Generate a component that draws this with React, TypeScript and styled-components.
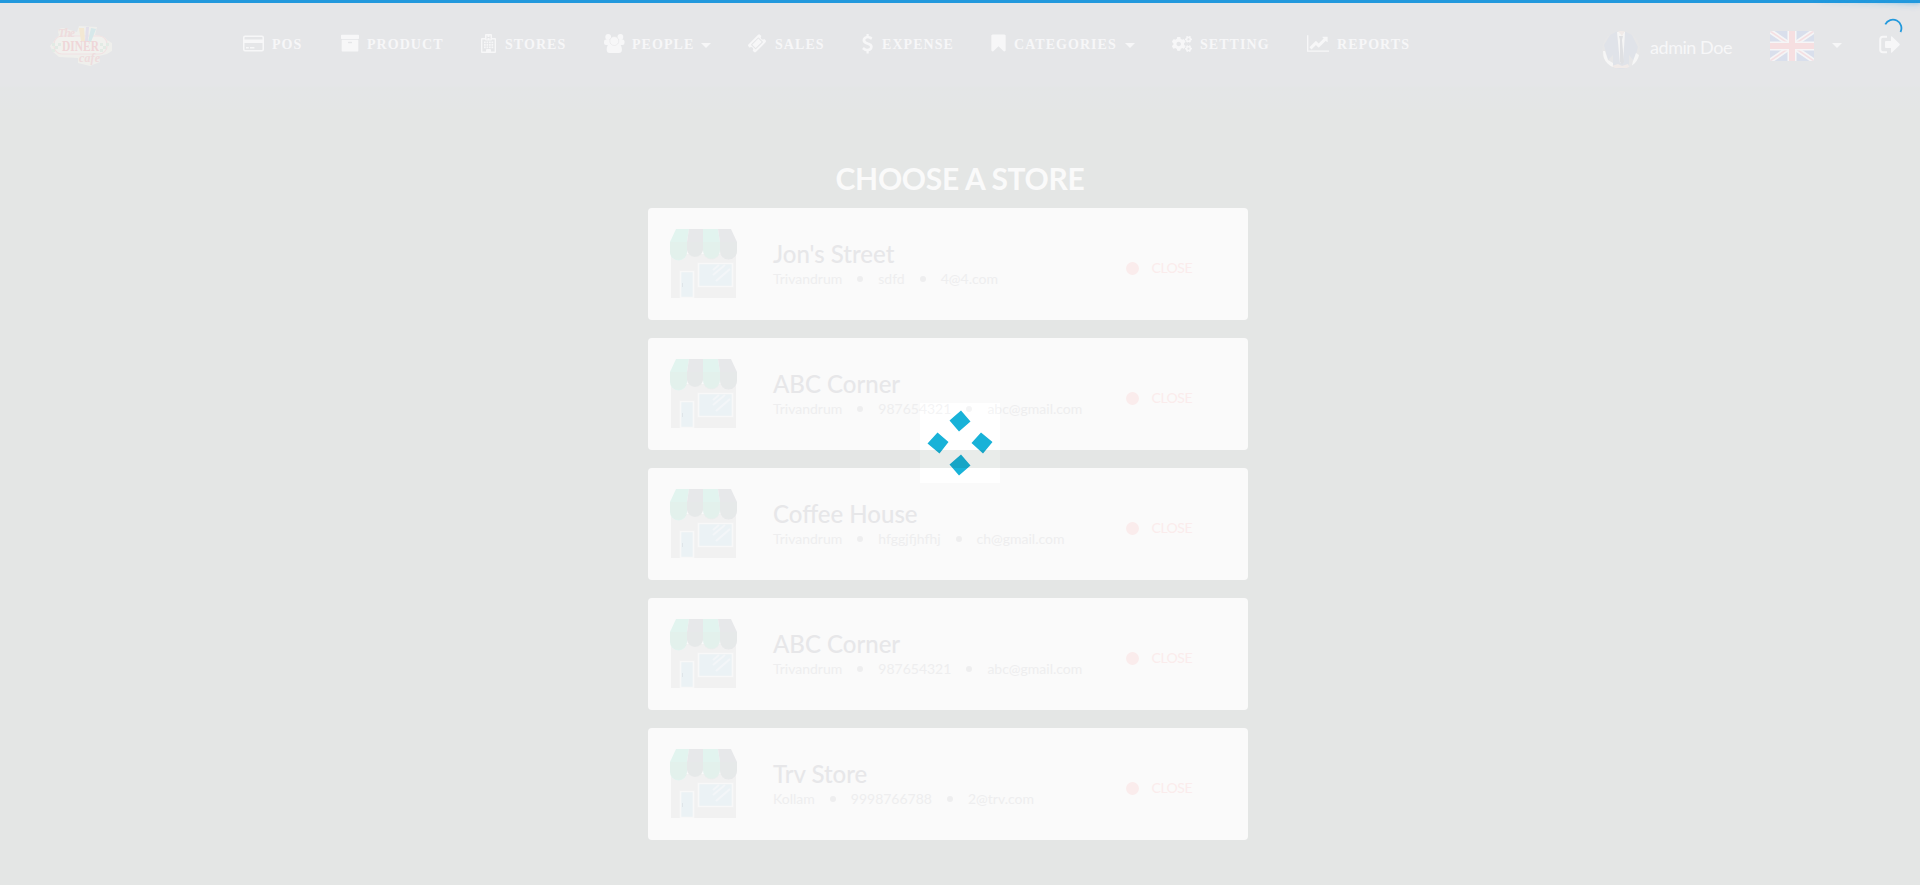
import React from 'react';
import styled, { createGlobalStyle } from 'styled-components';
import { FaCogs } from 'react-icons/fa';

const GlobalStyle = createGlobalStyle`
  * { box-sizing: border-box; }
  html, body { margin: 0; background: #e4e6e5; }
  body { height: 885px; overflow: hidden; font-family: Lato, sans-serif; }
  svg { display: block; }
`;

const Page = styled.div`
  height: 885px;
  overflow: hidden;
  background: #e4e6e5;
`;

const Header = styled.header`
  display: flex;
  height: 110px;
  padding: 24px 20px 0 48px;
  background: linear-gradient(#e5e6e8 0, #e5e6e8 86px, #e4e6e6 88px, #e4e6e7 92px, #e4e6e6 109px, #e4e6e5 110px);
  color: #f7f7f8;
`;

const Brand = styled.div`
  width: 195px;
`;

const Nav = styled.nav`
  display: flex;
  flex: 1;
`;

const NavItem = styled.a<{ $width: number }>`
  display: flex;
  width: ${(p) => p.$width}px;
  height: 42px;
  font: bold 14px/42px 'Liberation Serif', serif;
  letter-spacing: 1.05px;
  white-space: nowrap;
`;

const NavIcon = styled.span<{ $width: number }>`
  flex: none;
  width: ${(p) => p.$width}px;
  padding-top: 10px;
`;

const Caret = styled.span<{ $gap?: number }>`
  width: 10px;
  height: 5px;
  margin: 19px 0 0 ${(p) => p.$gap ?? 0}px;
  border: 5px solid transparent;
  border-top-color: currentColor;
  border-bottom: 0;
`;

const Account = styled.div`
  display: flex;
  width: 298px;
`;

const Avatar = styled.div`
  width: 38px;
  height: 38px;
  margin: 7px 10px 0 0;
`;

const UserName = styled.span`
  width: 120px;
  padding-top: 11px;
  font-size: 18px;
  letter-spacing: -0.45px;
  line-height: 24px;
  white-space: nowrap;
`;

const Flag = styled.div`
  width: 44px;
  height: 30px;
  margin: 7px 18px 0 0;
`;

const SignOut = styled.div`
  margin: 11px 0 0 37px;
`;

const Main = styled.main`
  width: 600px;
  margin-left: 648px;
`;

const Title = styled.h1`
  width: 624px;
  height: 98px;
  margin: 0;
  padding-top: 50px;
  color: #fafafa;
  font-size: 30px;
  font-weight: 700;
  letter-spacing: -0.3px;
  line-height: 36px;
  text-align: center;
  white-space: nowrap;
`;

const StoreList = styled.div`
  display: flex;
  flex-direction: column;
  gap: 18px;
`;

const StoreCard = styled.article`
  display: flex;
  height: 112px;
  padding: 21px 56px 0 22px;
  border-radius: 4px;
  background: #fafafa;
`;

const StorePicture = styled.div`
  width: 103px;
`;

const StoreInfo = styled.div`
  flex: 1;
  padding-top: 10px;
`;

const StoreName = styled.h2`
  margin: 0;
  color: #e7e7e9;
  font-size: 24px;
  font-weight: 500;
  line-height: 30px;
`;

const Meta = styled.div`
  display: flex;
  align-items: center;
  gap: 15px;
  margin-top: 1px;
  color: #eeeeef;
  font-size: 14px;
  line-height: 18px;
`;

const Dot = styled.i<{ $size: number }>`
  width: ${(p) => p.$size}px;
  height: ${(p) => p.$size}px;
  border-radius: 50%;
  background: currentColor;
`;

const Status = styled.div`
  display: flex;
  align-items: center;
  align-self: flex-start;
  gap: 13px;
  margin-top: 29px;
  color: #faecec;
  font-size: 14px;
  letter-spacing: -0.5px;
  line-height: 20px;
`;

const ProgressBar = styled.div`
  position: fixed;
  top: 0;
  left: 0;
  width: 100%;
  height: 3px;
  background: #2299dd;
`;

const ProgressGlow = styled.div`
  position: absolute;
  top: 0;
  right: 0;
  width: 100px;
  height: 3px;
  box-shadow: 0 0 10px #2299dd, 0 0 5px #2299dd;
  opacity: 0.8;
  transform: rotate(3deg) translate(0, -4px);
`;

const ProgressSpinner = styled.div`
  position: fixed;
  top: 18px;
  left: 1883px;
`;

const LoaderBox = styled.div`
  position: fixed;
  top: 403px;
  left: 920px;
  width: 80px;
  height: 80px;
  background: #060606;
  mix-blend-mode: color-dodge;
`;

const LoaderMarks = styled.div`
  position: fixed;
  top: 403px;
  left: 920px;
  mix-blend-mode: multiply;
`;

const PATHS = {
  archive:
    'M1088 832q0-26-19-45t-45-19h-256q-26 0-45 19t-19 45 19 45 45 19h256q26 0 45-19t19-45zm576-192v960q0 26-19 45t-45 19h-1408q-26 0-45-19t-19-45v-960q0-26 19-45t45-19h1408q26 0 45 19t19 45zm64-448v256q0 26-19 45t-45 19h-1536q-26 0-45-19t-19-45v-256q0-26 19-45t45-19h1536q26 0 45 19t19 45z',
  ticket:
    'M1024 452l316 316-572 572-316-316zm-211 979l618-618q19-19 19-45t-19-45l-362-362q-18-18-45-18t-45 18l-618 618q-19 19-19 45t19 45l362 362q18 18 45 18t45-18zm889-637l-907 908q-37 37-90.5 37t-90.5-37l-126-126q56-56 56-136t-56-136-136-56-136 56l-125-126q-37-37-37-90.5t37-90.5l907-906q37-37 90.5-37t90.5 37l125 125q-56 56-56 136t56 136 136 56 136-56l126 125q37 37 37 90.5t-37 90.5z',
  dollar:
    'M1362 1185q0 153-99.5 263.5t-258.5 136.5v175q0 14-9 23t-23 9h-135q-13 0-22.5-9.5t-9.5-22.5v-175q-66-9-127.5-31t-101.5-44.5-74-48-46.5-37.5-17.5-18q-17-21-2-41l103-135q7-10 23-12 15-2 24 9l2 2q113 99 243 125 37 8 74 8 81 0 142.5-43t61.5-122q0-28-15-53t-33.5-42-58.5-37.5-66-32-80-32.5q-39-16-61.5-25t-61.5-26.5-62.5-31-56.5-35.5-53.5-42.5-43.5-49-35.5-58-21-66.5-8.5-78q0-138 98-242t255-134v-180q0-13 9.5-22.5t22.5-9.5h135q14 0 23 9t9 23v176q57 6 110.5 23t87 33.5 63.5 37.5 39 29 15 14q17 18 5 38l-81 146q-8 15-23 16-14 3-27-7-3-3-14.5-12t-39-26.5-58.5-32-74.5-26-85.5-11.5q-95 0-155 43t-60 111q0 26 8.5 48t29.5 41.5 39.5 33 56 31 60.5 27 70 27.5q53 20 81 31.5t76 35 75.5 42.5 62 50 53 63.5 31.5 76.5 13 94z',
  bookmark:
    'M1420 128q23 0 44 9 33 13 52.5 41t19.5 62v1289q0 34-19.5 62t-52.5 41q-19 8-44 8-48 0-83-32l-441-424-441 424q-36 33-83 33-23 0-44-9-33-13-52.5-41t-19.5-62v-1289q0-34 19.5-62t52.5-41q21-9 44-9h1048z',
  chart:
    'M2048 1536v128h-2048v-1536h128v1408h1920zm-128-1248v435q0 21-19.5 29.5t-35.5-7.5l-121-121-633 633q-10 10-23 10t-23-10l-233-233-416 416-192-192 585-585q10-10 23-10t23 10l233 233 464-464-121-121q-16-16-7.5-35.5t29.5-19.5h435q14 0 23 9t9 23z',
};

const Glyph = ({ d, box, w, h = 20 }: { d: string; box: string; w: number; h?: number }) => (
  <svg width={w} height={h} viewBox={box} fill="currentColor">
    <path d={d} />
  </svg>
);

const CardIcon = () => (
  <svg width="21" height="20" viewBox="0 0 21 20" fill="currentColor">
    <path fillRule="evenodd" d="M2 1.500h17a2 2 0 0 1 2 2v12a2 2 0 0 1-2 2H2a2 2 0 0 1-2-2v-12a2 2 0 0 1 2-2zM1.500 3.500v2h18v-2l-.5-.5H2zM1.500 9v6.500l.5.500h17l.5-.500V9zM3 13h2.800v1.500H3zM7 13h4.400v1.500H7z" />
  </svg>
);

const HospitalIcon = () => (
  <svg width="15" height="20" viewBox="0 0 15 20" fill="currentColor">
    <path fillRule="evenodd" d="M4 4V1q0-1 1-1h5q1 0 1 1v3h3q1 0 1 1v13q0 1-1 1H1q-1 0-1-1V5q0-1 1-1zM1.400 5.400v12.200H5V16q0-1 1-1h3q1 0 1 1v1.600h3.600V5.400H11q0 1-1 1H5q-1 0-1-1z" />
    <path d="M3 7.500h1.700v1.700H3zM5.500 7.500h1.700v1.700H5.500zM8 7.500h1.700v1.700H8zM10.500 7.500h1.700v1.700h-1.700zM3 10h1.700v1.700H3zM5.500 10h1.700v1.700H5.500zM8 10h1.700v1.700H8zM10.500 10h1.700v1.700h-1.700zM3 12.500h1.700v1.700H3zM5.500 12.500h1.700v1.700H5.500zM8 12.500h1.700v1.700H8zM10.500 12.500h1.700v1.700h-1.700z" />
    <path d="M6 1.500v4M9 1.500v4M6 3.500h3" stroke="#e5e6e8" strokeWidth="1" />
  </svg>
);

const UsersIcon = () => (
  <svg width="21" height="20" viewBox="0 1 21 20" fill="currentColor">
    <circle cx="4.200" cy="4" r="2.900" />
    <circle cx="16.400" cy="4" r="2.900" />
    <rect y="6.500" width="6.500" height="5.500" rx="2" />
    <rect x="14" y="6.500" width="6.500" height="5.500" rx="2" />
    <path d="M2.700 17c0-4 1.500-6.500 4-6.500h7.200c2.500 0 4 2.500 4 6.500 0 2-1.200 3-3 3H5.700c-1.800 0-3-1-3-3z" />
    <circle cx="10.300" cy="8" r="4.500" stroke="#e5e6e8" strokeWidth=".6" />
  </svg>
);

const SignOutIcon = () => (
  <svg width="21" height="19" viewBox="0 0 21 19" fill="currentColor">
    <path d="M8 1.700H4Q1.200 1.700 1.200 4.500v10q0 2.800 2.800 2.800h4" fill="none" stroke="currentColor" strokeWidth="2" />
    <path d="M6 7q0-1 1-1h5V2q0-1.300 1-.6l7.500 7.400q.6.700 0 1.400L13 17.500q-1 .8-1-.6V13H7q-1 0-1-1z" />
  </svg>
);

const Logo = () => (
  <svg width="68" height="44" viewBox="0 0 68 44">
    <path d="M11 11Q8 4 15 4l14 4 2-6 18 1-2 8q10 1 12 5l5 3v8l-5 3-8 2 1 6-10 4-12-3v-5l-19-1-6-5-3-6 4-5z" fill="#efefec" />
    <rect x="6" y="12" width="53" height="18" rx="8" fill="#f1f1ee" stroke="#f1e2e3" strokeWidth="1.200" />
    <g fill="#e2ebe5">
      <path d="M4 19h3v3H4zM7 22h3v3H7zM4 25h3v3H4zM10 19h3v3h-3zM52 19h3v3h-3zM55 22h3v3h-3zM52 25h3v3h-3zM58 19h3v3h-3z" />
    </g>
    <path d="m31 4 5 0 1 13h-4z" fill="#f3e8d3" />
    <path d="m38 3 3 0-1 14h-3z" fill="#e3e0ea" />
    <path d="m43 4 5 1-5 13h-3z" fill="#d6e8ea" />
    <text x="10" y="13" fill="#eedcdd" fontFamily="Liberation Serif" fontSize="12" fontStyle="italic" fontWeight="700" textLength="17">The</text>
    <text x="14" y="27" fill="#efd6d8" fontFamily="Liberation Serif" fontSize="14" fontWeight="700" textLength="37" lengthAdjust="spacingAndGlyphs">DINER</text>
    <text x="31" y="38" fill="#eedcdd" fontFamily="Liberation Serif" fontSize="12" fontStyle="italic" fontWeight="700" textLength="21">cafe</text>
  </svg>
);

const Portrait = () => (
  <svg width="38" height="38" viewBox="0 0 38 38">
    <defs>
      <clipPath id="portrait"><circle cx="19" cy="19" r="19" /></clipPath>
    </defs>
    <g clipPath="url(#portrait)">
      <rect width="38" height="38" fill="#e7e7e8" />
      <path d="M2 14 8 4l7-4 4 3 4-3 7 4 6 12-4 14-5-6v14H11V24l-5 5z" fill="#e0e3e9" />
      <path d="m3 20 3 9 5 3v6H8Q1 32 1 20zM34 22l-3 8-2 8q7-3 8-14z" fill="#f6f6f6" />
      <path d="M15 1h8l-2 31h-3z" fill="#f5f5f5" />
      <path d="m17 5 4 0-1 4 2 22-2 3-2-3V9z" fill="#dfe0e3" />
      <path d="M16 0h7l-3 5zM10 35l6-2 4 2 6-2 2 4H12z" fill="#f1ebe9" />
    </g>
  </svg>
);

const UnionJack = () => (
  <svg width="44" height="30" viewBox="0 0 44 30">
    <defs>
      <clipPath id="flag"><rect width="44" height="30" rx="2" /></clipPath>
    </defs>
    <g clipPath="url(#flag)">
      <rect width="44" height="30" fill="#d9dfec" />
      <path d="m0 0 44 30M44 0 0 30" stroke="#f5f5f6" strokeWidth="5" />
      <path d="m0 0 44 30M44 0 0 30" stroke="#f5dfe2" strokeWidth="1.600" />
      <path d="M22 0v30M0 15h44" stroke="#f6f6f7" strokeWidth="9" />
      <path d="M22 0v30M0 15h44" stroke="#f6dfe1" strokeWidth="6" />
    </g>
  </svg>
);

const Shop = () => (
  <svg width="67" height="69" viewBox="0 0 67 69">
    <path d="M1 25h65v44H1z" fill="#f1f1f1" />
    <path d="M6 0h13l-2 13v10a8.500 8.500 0 0 1-17 0V13z" fill="#e2f4ef" />
    <path d="M19 0h14v21a8.200 8.500 0 0 1-16 0V13z" fill="#e7e8ea" />
    <path d="M33 0h15l2 13v8a8.200 8.500 0 0 1-17 0z" fill="#e2f4ef" />
    <path d="M48 0h13l6 13v9a8.400 8.500 0 0 1-17 0V13z" fill="#e7e8ea" />
    <path d="M0 13h67v8a8.400 8.500 0 0 1-17 1 8.400 8.500 0 0 1-17 0 8.400 8.500 0 0 1-16 0 8.400 8.500 0 0 1-17 0z" fill="#e6ebe8" opacity=".35" />
    <path d="M28.500 34.500h34v23h-34zM10.500 42.500h13v26h-13z" fill="#ebf2f5" stroke="#f8f8f8" strokeWidth="1.600" />
    <path d="m43 41 6-5M43 46l12-10M46 52l14-12" stroke="#f3f6f8" strokeWidth="2" />
    <path d="M12.500 54v4" stroke="#dfe5e9" />
  </svg>
);

const navItems = [
  { label: 'POS', icon: <CardIcon />, width: 98, iconWidth: 29 },
  { label: 'PRODUCT', icon: <Glyph d={PATHS.archive} box="64 80 1664 1792" w={18} />, width: 140, iconWidth: 26 },
  { label: 'STORES', icon: <HospitalIcon />, width: 123, iconWidth: 24 },
  { label: 'PEOPLE', icon: <UsersIcon />, width: 144, iconWidth: 28, caret: 7 },
  { label: 'SALES', icon: <Glyph d={PATHS.ticket} box="53 60 1686 1792" w={18} />, width: 114, iconWidth: 27 },
  { label: 'EXPENSE', icon: <Glyph d={PATHS.dollar} box="420 40 950 1792" w={11} />, width: 129, iconWidth: 20 },
  { label: 'CATEGORIES', icon: <Glyph d={PATHS.bookmark} box="256 80 1280 1792" w={15} />, width: 181, iconWidth: 23, caret: 8 },
  { label: 'SETTING', icon: <FaCogs size={20} />, width: 135, iconWidth: 28 },
  { label: 'REPORTS', icon: <Glyph d={PATHS.chart} box="0 40 2048 1792" w={22} />, width: 110, iconWidth: 30 },
];

const stores = [
  { name: "Jon's Street", meta: ['Trivandrum', 'sdfd', '4@4.com'] },
  { name: 'ABC Corner', meta: ['Trivandrum', '987654321', 'abc@gmail.com'] },
  { name: 'Coffee House', meta: ['Trivandrum', 'hfggjfjhfhj', 'ch@gmail.com'] },
  { name: 'ABC Corner', meta: ['Trivandrum', '987654321', 'abc@gmail.com'] },
  { name: 'Trv Store', meta: ['Kollam', '9998766788', '2@trv.com'] },
];

export default function App() {
  return (
    <>
      <GlobalStyle />
      <Page>
        <Header>
          <Brand><Logo /></Brand>
          <Nav>
            {navItems.map((item) => (
              <NavItem key={item.label} $width={item.width}>
                <NavIcon $width={item.iconWidth}>{item.icon}</NavIcon>
                {item.label}
                {item.caret && <Caret $gap={item.caret} />}
              </NavItem>
            ))}
          </Nav>
          <Account>
            <Avatar><Portrait /></Avatar>
            <UserName>admin Doe</UserName>
            <Flag><UnionJack /></Flag>
            <Caret />
            <SignOut><SignOutIcon /></SignOut>
          </Account>
        </Header>
        <Main>
          <Title>CHOOSE A STORE</Title>
          <StoreList>
            {stores.map((store, index) => (
              <StoreCard key={index}>
                <StorePicture><Shop /></StorePicture>
                <StoreInfo>
                  <StoreName>{store.name}</StoreName>
                  <Meta>
                    <span>{store.meta[0]}</span>
                    <Dot $size={6} />
                    <span>{store.meta[1]}</span>
                    <Dot $size={6} />
                    <span>{store.meta[2]}</span>
                  </Meta>
                </StoreInfo>
                <Status><Dot $size={13} />CLOSE</Status>
              </StoreCard>
            ))}
          </StoreList>
        </Main>
      </Page>
      <LoaderBox />
      <LoaderMarks>
        <svg width="80" height="80" viewBox="0 0 80 80" fill="#18b2d8">
          <path d="m41 7.500 9.500 11L39 28.500l-9.500-11zM17.500 29.500l11 9.500-9 11.500-12-10zM61 29.500 72.500 39 63 50.500 51.500 40zM41 51.500l9.500 11-11.500 10-9.500-11z" />
        </svg>
      </LoaderMarks>
      <ProgressBar><ProgressGlow /></ProgressBar>
      <ProgressSpinner>
        <svg width="20" height="20" viewBox="0 0 20 20">
          <path d="M2.300 6.300A8 8 0 0 1 17.500 14" fill="none" stroke="#2299dd" strokeWidth="1.800" />
        </svg>
      </ProgressSpinner>
    </>
  );
}
